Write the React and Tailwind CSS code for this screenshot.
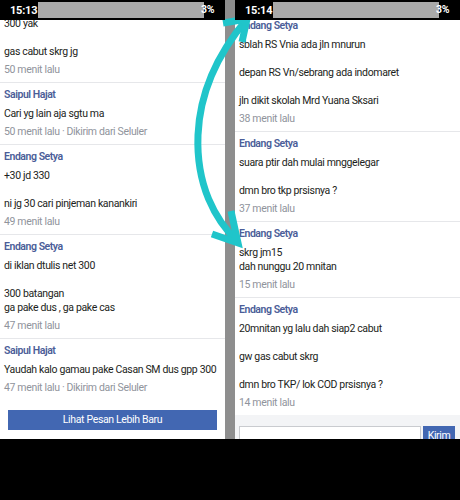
import React from "react";

const leftMsgs = [
  { name: null, lines: "300 yak\n\ngas cabut skrg jg", time: "50 menit lalu", first: true },
  { name: "Saipul Hajat", lines: "Cari yg lain aja sgtu ma", time: "50 menit lalu · Dikirim dari Seluler" },
  { name: "Endang Setya", lines: "+30 jd 330\n\nni jg 30 cari pinjeman kanankiri", time: "49 menit lalu" },
  { name: "Endang Setya", lines: "di iklan dtulis net 300\n\n300 batangan\nga pake dus , ga pake cas", time: "47 menit lalu" },
  { name: "Saipul Hajat", lines: "Yaudah kalo gamau pake Casan SM dus gpp 300", time: "47 menit lalu · Dikirim dari Seluler", last: true },
];

const rightMsgs = [
  { name: "Endang Setya", lines: "sblah RS Vnia ada jln mnurun\n\ndepan RS Vn/sebrang ada indomaret\n\njln dikit skolah Mrd Yuana Sksari", time: "38 menit lalu" },
  { name: "Endang Setya", lines: "suara ptir dah mulai mnggelegar\n\ndmn bro tkp prsisnya ?", time: "37 menit lalu" },
  { name: "Endang Setya", lines: "skrg jm15\ndah nunggu 20 mnitan", time: "15 menit lalu" },
  { name: "Endang Setya", lines: "20mnitan yg lalu dah siap2 cabut\n\ngw gas cabut skrg\n\ndmn bro TKP/ lok COD prsisnya ?", time: "14 menit lalu", last: true },
];

function Msg({ m }) {
  return (
    <div className={`px-[4px] ${m.name ? "pt-[5px]" : ""} pb-[5px] ${m.last ? "" : "border-b border-[#e6e7ea]"}`}>
      {m.name && (
        <div className="h-[14px] leading-[14px] font-semibold text-[#4b5d98] tracking-[-0.45px]">{m.name}</div>
      )}
      <div className={`${m.name ? "mt-[5px]" : ""} whitespace-pre leading-[14px] text-[#1c1e21]`}>{m.lines}</div>
      <div className="mt-[4px] h-[14px] leading-[14px] text-[#90949c] whitespace-nowrap">{m.time}</div>
    </div>
  );
}

function StatusBar({ time }) {
  return (
    <div className="h-[20px] bg-black flex items-center shrink-0 relative z-10 overflow-hidden">
      <span className="ml-[10px] text-white font-bold text-[11px] leading-none w-[25px] tracking-[-0.2px]">{time}</span>
      <div className="ml-[3px] w-[166px] h-[16px] bg-[#a9a9a9] shrink-0"></div>
      <span className="ml-[-3px] text-white font-bold text-[10.5px] leading-none">3%</span>
    </div>
  );
}

export default function App() {
  return (
    <div className="relative w-[460px] h-[500px] bg-black overflow-hidden text-[10.5px] tracking-[-0.35px]" style={{ fontFamily: "Roboto, 'Noto Sans', sans-serif" }}>
      <div className="flex h-[439px]">
        <div className="w-[225px] flex flex-col bg-white">
          <StatusBar time="15:13" />
          <div className="flex-1 overflow-hidden">
            <div className="mt-[-3px]">
              {leftMsgs.map((m, i) => (
                <Msg key={i} m={m} />
              ))}
              <div className="px-[8px] pt-[10px] pb-[9px] border-b border-[#dddfe2]">
                <div className="h-[20px] bg-[#4267b2] flex items-center justify-center text-white text-[10.5px]">
                  Lihat Pesan Lebih Baru
                </div>
              </div>
            </div>
          </div>
        </div>
        <div className="w-[10px] bg-[#8e8e8e]"></div>
        <div className="flex-1 flex flex-col bg-white">
          <StatusBar time="15:14" />
          <div className="flex-1 overflow-hidden flex flex-col">
            <div className="mt-[-6px]">
              {rightMsgs.map((m, i) => (
                <Msg key={i} m={m} />
              ))}
            </div>
            <div className="flex-1 bg-[#f3f4f6] pt-[11px] pl-[4px] pr-[5px] flex gap-[2px]">
              <div className="flex-1 h-[24px] bg-white border border-[#c9cbcf]"></div>
              <div className="w-[32px] h-[24px] bg-[#4267b2] text-white text-[10.5px] flex justify-center pt-[2px]">Kirim</div>
            </div>
          </div>
        </div>
      </div>
      <svg className="absolute left-0 top-0 pointer-events-none" width="460" height="500" viewBox="0 0 460 500">
        <g fill="none" stroke="#20c5ca" strokeWidth="7" strokeLinejoin="miter">
          <path d="M247 19 C 225 45, 200 85, 198 135 C 196 185, 215 220, 238 242" />
          <path d="M223 23 L247 19 L242 42" />
          <path d="M212 234 L238 243 L231 211" />
        </g>
      </svg>
    </div>
  );
}
